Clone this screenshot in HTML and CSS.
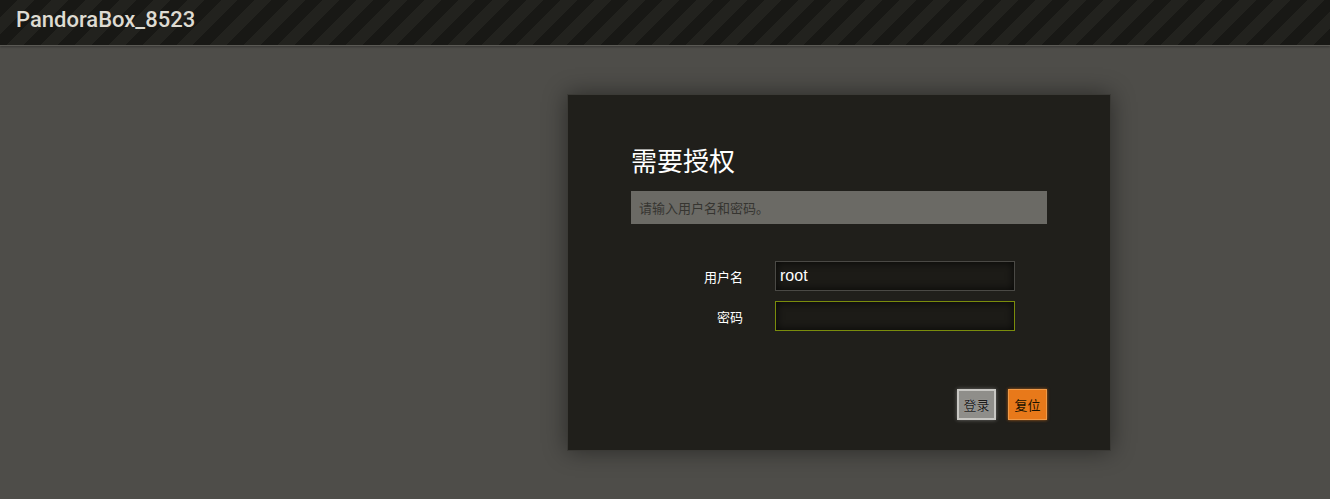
FILE: index.html
```html
<!DOCTYPE html>
<html lang="zh">
<head>
<meta charset="utf-8">
<title>PandoraBox_8523</title>
<link rel="stylesheet" href="styles.css">
</head>
<body>
<header class="topbar">
  <span class="brand">PandoraBox_8523</span>
</header>
<main class="main">
  <form class="card">
    <h2 class="title">需要授权</h2>
    <div class="notice">请输入用户名和密码。</div>
    <div class="fields">
      <div class="row">
        <label class="label">用户名</label>
        <input class="input" type="text" value="root">
      </div>
      <div class="row">
        <label class="label">密码</label>
        <input class="input focus" type="password" value="">
      </div>
    </div>
    <div class="actions">
      <button type="button" class="btn btn-gray">登录</button>
      <button type="button" class="btn btn-orange">复位</button>
    </div>
  </form>
</main>
</body>
</html>
```
FILE: styles.css
```css
html, body {
  margin: 0;
  padding: 0;
}
body {
  background: #4e4d49;
  font-family: "Liberation Sans", "Noto Sans CJK SC", sans-serif;
  height: 499px;
  overflow: hidden;
}
.topbar {
  height: 46px;
  border-bottom: 1px solid #5a5954;
  background: repeating-linear-gradient(-45deg, #181815 0px, #181815 12px, #22221e 12px, #22221e 24px);
  display: flex;
  align-items: center;
  padding-left: 16px;
  box-sizing: border-box;
  box-shadow: 0 1px 2px rgba(0,0,0,0.3);
}
.brand {
  color: #dedbd2;
  font-family: "Roboto", sans-serif;
  font-weight: 500;
  font-size: 22px;
  letter-spacing: 0px;
  margin-top: -6px;
}
.main {
  padding: 48px 0 0 567px;
}
.card {
  width: 544px;
  height: 357px;
  box-sizing: border-box;
  background: #201f1b;
  border: 1px solid #3b3a36;
  box-shadow: 0 0 22px rgba(0,0,0,0.45);
  padding: 50px 63px 0 63px;
  display: flex;
  flex-direction: column;
  margin: 0;
}
.title {
  margin: 0;
  font-weight: normal;
  font-size: 26px;
  line-height: 30px;
  color: #ffffff;
  font-family: "Noto Sans CJK SC", sans-serif;
}
.notice {
  margin-top: 16px;
  height: 33px;
  line-height: 33px;
  background: #6b6a65;
  color: #363531;
  font-size: 13px;
  padding-left: 8px;
  font-family: "Noto Sans CJK SC", sans-serif;
}
.fields {
  margin-top: 37px;
  display: flex;
  flex-direction: column;
  gap: 10px;
}
.row {
  display: flex;
  align-items: center;
  gap: 32px;
}
.label {
  width: 112px;
  text-align: right;
  color: #ffffff;
  font-size: 13px;
  font-family: "Noto Sans CJK SC", sans-serif;
}
.input {
  width: 240px;
  height: 30px;
  box-sizing: border-box;
  background: #1c1b17;
  border: 1px solid #4a4945;
  box-shadow: inset 0 0 8px rgba(0,0,0,0.8);
  color: #ffffff;
  font-family: "Liberation Sans", sans-serif;
  font-size: 16px;
  padding: 0 4px;
  margin: 0;
  outline: none;
}
.input.focus {
  border-color: #7a8c0c;
}
.actions {
  margin-top: 58px;
  display: flex;
  justify-content: flex-end;
  gap: 12px;
}
.btn {
  height: 31px;
  width: 39px;
  padding: 0;
  font-size: 13px;
  font-family: "Noto Sans CJK SC", sans-serif;
  color: #1a1a1a;
  cursor: pointer;
}
.btn-gray {
  background: #8f8e8a;
  border: 2px solid #c8c7c3;
  box-shadow: 0 0 4px rgba(255,255,255,0.35);
  text-shadow: 0 0 1px rgba(255,255,255,0.5);
}
.btn-orange {
  background: #e8791a;
  border: 1px solid #f09a48;
  box-shadow: 0 0 3px rgba(232,121,26,0.7);
  color: #1a1200;
}
```
